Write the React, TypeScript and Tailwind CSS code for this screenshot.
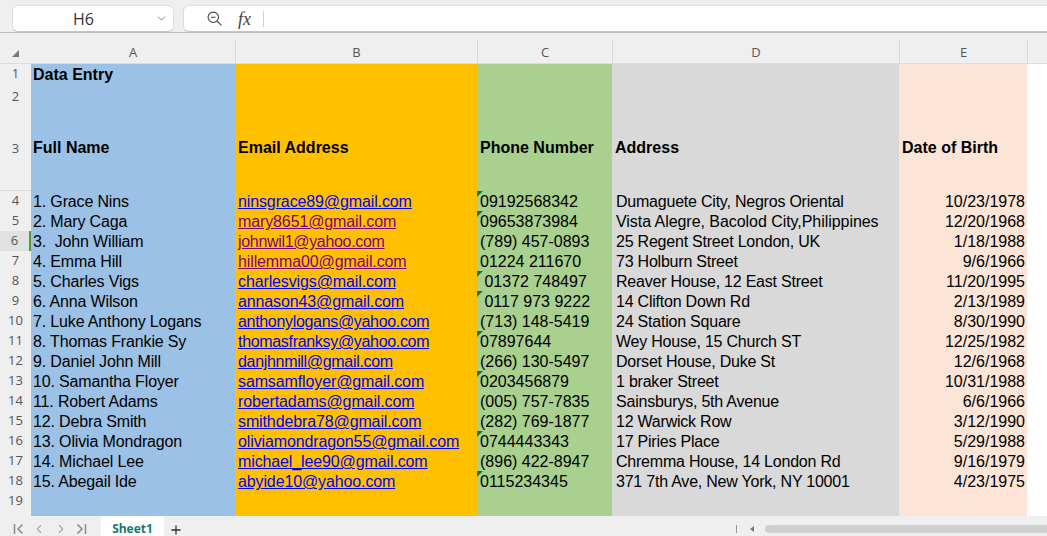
import { ChevronDown, Plus, ChevronLeft, ChevronRight } from "lucide-react";

const people = [
  { name: "1. Grace Nins", email: "ninsgrace89@gmail.com", phone: "09192568342", address: "Dumaguete City, Negros Oriental", dob: "10/23/1978", flag: true },
  { name: "2. Mary Caga", email: "mary8651@gmail.com", visited: true, phone: "09653873984", address: "Vista Alegre, Bacolod City,Philippines", wide: true, dob: "12/20/1968", flag: true },
  { name: "3.  John William", email: "johnwil1@yahoo.com", visited: true, tight: true, phone: "(789) 457-0893", address: "25 Regent Street London, UK", dob: "1/18/1988" },
  { name: "4. Emma Hill", email: "hillemma00@gmail.com", visited: true, phone: "01224 211670", address: "73 Holburn Street", dob: "9/6/1966" },
  { name: "5. Charles Vigs", email: "charlesvigs@mail.com", phone: " 01372 748497", address: "Reaver House, 12 East Street", dob: "11/20/1995", flag: true },
  { name: "6. Anna Wilson", email: "annason43@gmail.com", phone: " 0117 973 9222", address: "14 Clifton Down Rd", dob: "2/13/1989", flag: true },
  { name: "7. Luke Anthony Logans", email: "anthonylogans@yahoo.com", tight: true, phone: "(713) 148-5419", address: "24 Station Square", dob: "8/30/1990" },
  { name: "8. Thomas Frankie Sy", email: "thomasfranksy@yahoo.com", tight: true, phone: "07897644", address: "Wey House, 15 Church ST", dob: "12/25/1982", flag: true },
  { name: "9. Daniel John Mill", email: "danjhnmill@gmail.com", tight: true, phone: "(266) 130-5497", address: "Dorset House, Duke St", dob: "12/6/1968" },
  { name: "10. Samantha Floyer", email: "samsamfloyer@gmail.com", phone: "0203456879", address: "1 braker Street", dob: "10/31/1988", flag: true },
  { name: "11. Robert Adams", email: "robertadams@gmail.com", phone: "(005) 757-7835", address: "Sainsburys, 5th Avenue", dob: "6/6/1966" },
  { name: "12. Debra Smith", email: "smithdebra78@gmail.com", phone: "(282) 769-1877", address: "12 Warwick Row", dob: "3/12/1990" },
  { name: "13. Olivia Mondragon", email: "oliviamondragon55@gmail.com", phone: "0744443343", address: "17 Piries Place", dob: "5/29/1988", flag: true },
  { name: "14. Michael Lee", email: "michael_lee90@gmail.com", phone: "(896) 422-8947", address: "Chremma House, 14 London Rd", dob: "9/16/1979" },
  { name: "15. Abegail Ide", email: "abyide10@yahoo.com", phone: "0115234345", address: "371 7th Ave, New York, NY 10001", dob: "4/23/1975", flag: true },
];

const grid = "grid grid-cols-[31px_204px_242px_135px_287px_128px_20px]";
const rowNum = "flex items-center justify-center border-b border-[#dcdcdc] text-[13px] font-['Open_Sans',sans-serif] text-[#555]";
const cell = "flex items-center whitespace-pre text-[16px] leading-5 text-black overflow-visible";

function Row({ num, h, active, numPad = "pb-[2px]", children }: { num?: number; h: string; active?: boolean; numPad?: string; children?: React.ReactNode }) {
  return (
    <div className={`${grid} ${h}`}>
      <div className={`${rowNum} ${numPad} ${active ? "bg-[#e1e1e1] text-[#0f7b6c] border-r-2 border-r-[#4c9a3f]" : "bg-[#efefef]"}`}>{num}</div>
      {children}
    </div>
  );
}

function EmptyCells() {
  return (
    <>
      <div className="bg-[#9bc2e6]" />
      <div className="bg-[#ffc000]" />
      <div className="bg-[#a9d08e]" />
      <div className="bg-[#d9d9d9]" />
      <div className="bg-[#fce4d6]" />
    </>
  );
}

function Header({ label }: { label: string }) {
  return (
    <div className={`mt-[7px] flex items-center justify-center pt-[3px] font-['Open_Sans',sans-serif] text-[13px] text-[#555] ${label === "A" ? "" : "border-l border-[#d8d8d8]"}`}>
      {label}
    </div>
  );
}

export default function App() {
  return (
    <div className="flex h-[536px] w-[1047px] flex-col overflow-hidden bg-white font-['Liberation_Sans',Arial,sans-serif]">
      {/* formula bar */}
      <div className="flex h-[33px] shrink-0 items-start gap-[9px] border-b border-[#bdbdbd] bg-[#efefef] pl-3 pt-[5px] font-['Open_Sans',sans-serif]">
        <div className="flex h-[27px] w-[162px] items-center justify-between rounded-md border border-[#dcdcdc] border-b-[#c4c4c4] bg-white pl-[60px] pr-[5px] text-[16px] text-[#333]">
          H6
          <ChevronDown size={13} strokeWidth={1.5} className="text-[#666]" />
        </div>
        <div className="flex h-[27px] flex-1 items-center rounded-l-md border border-r-0 border-[#dcdcdc] border-b-[#c4c4c4] bg-white pl-[23px]">
          <svg width="15" height="15" viewBox="0 0 15 15" fill="none" stroke="#444" strokeWidth="1.1">
            <circle cx="6.3" cy="6.3" r="5.2" />
            <path d="M4 6.3h4.6M10 10l4.4 4.4" />
          </svg>
          <span className="ml-[16px] font-['Liberation_Serif',serif] text-[18px] italic leading-none text-[#444]">fx</span>
          <div className="ml-[12px] h-4 w-px bg-[#cfcfcf]" />
        </div>
      </div>

      {/* column headers */}
      <div className={`${grid} h-[31px] shrink-0 border-b border-[#dcdcdc] bg-[#efefef]`}>
        <div className="flex items-end justify-center pb-[6px]">
          <div className="h-0 w-0 border-b-[7px] border-l-[7px] border-b-[#777] border-l-transparent" />
        </div>
        <Header label="A" />
        <Header label="B" />
        <Header label="C" />
        <Header label="D" />
        <Header label="E" />
        <div className="mt-[7px] border-l border-[#d8d8d8]" />
      </div>

      {/* sheet */}
      <div className="flex-1 overflow-hidden bg-white">
        <Row num={1} h="h-5">
          <div className={`${cell} bg-[#9bc2e6] pl-[2px] font-bold`}>Data Entry</div>
          <div className="bg-[#ffc000]" />
          <div className="bg-[#a9d08e]" />
          <div className="bg-[#d9d9d9]" />
          <div className="bg-[#fce4d6]" />
        </Row>
        <Row num={2} h="h-5" numPad="pt-[3px]">
          <EmptyCells />
        </Row>
        <Row num={3} h="h-[87px]" numPad="pt-[3px]">
          <div className={`${cell} pt-[1px] bg-[#9bc2e6] pl-[2px] font-bold`}>Full Name</div>
          <div className={`${cell} pt-[1px] bg-[#ffc000] pl-[3px] font-bold`}>Email Address</div>
          <div className={`${cell} pt-[1px] bg-[#a9d08e] pl-[3px] font-bold`}>Phone Number</div>
          <div className={`${cell} pt-[1px] bg-[#d9d9d9] pl-[3px] font-bold`}>Address</div>
          <div className={`${cell} pt-[1px] bg-[#fce4d6] pl-[3px] font-bold`}>Date of Birth</div>
        </Row>
        {people.map((p, i) => (
          <Row key={p.email} num={i + 4} h="h-5" active={i === 2}>
            <div className={`${cell} bg-[#9bc2e6] pl-[2px] tracking-[-0.15px]`}>{p.name}</div>
            <div className={`${cell} bg-[#ffc000] pl-[3px]`}>
              <span className={`underline ${p.tight ? "tracking-[-0.32px]" : "tracking-[-0.12px]"} ${p.visited ? "text-[#800080]" : "text-[#0000ff]"}`}>{p.email}</span>
            </div>
            <div className={`${cell} relative bg-[#a9d08e] pl-[3px]`}>
              {p.flag && (
                <div className="absolute left-0 top-0 h-0 w-0 border-r-[6px] border-t-[6px] border-r-transparent border-t-[#107c41]" />
              )}
              {p.phone}
            </div>
            <div className={`${cell} bg-[#d9d9d9] pl-[4px] ${p.wide ? "tracking-[-0.05px]" : "tracking-[-0.22px]"}`}>{p.address}</div>
            <div className={`${cell} justify-end bg-[#fce4d6] pr-[2px]`}>{p.dob}</div>
          </Row>
        ))}
        <Row num={19} h="h-5">
          <EmptyCells />
        </Row>
        <Row h="h-5">
          <EmptyCells />
        </Row>
      </div>

      {/* sheet tabs */}
      <div className="flex h-5 shrink-0 items-end bg-[#efefef]">
        <div className="flex h-[14px] w-[101px] items-center gap-[8px] pl-[13px] text-[#8a8a8a]">
          <svg width="11" height="12" viewBox="0 0 11 12" fill="none" stroke="currentColor" strokeWidth="1.5">
            <path d="M1.5 1v10M9.5 1.5 5 6l4.5 4.5" />
          </svg>
          <ChevronLeft size={14} strokeWidth={1.8} />
          <ChevronRight size={14} strokeWidth={1.8} />
          <svg width="11" height="12" viewBox="0 0 11 12" fill="none" stroke="currentColor" strokeWidth="1.5">
            <path d="M9.5 1v10M1.5 1.5 6 6l-4.5 4.5" />
          </svg>
        </div>
        <div className="flex h-full w-[63px] items-end justify-center bg-white font-['Open_Sans',sans-serif] text-[12px] font-bold leading-[14px] text-[#0f7b6c]">
          Sheet1
        </div>
        <Plus size={14} strokeWidth={2.2} className="-mb-px ml-[5px] text-[#333]" />
        <div className="mb-[3px] ml-auto flex items-center">
          <div className="h-[8px] w-px bg-[#999]" />
          <div className="ml-[13px] h-0 w-0 border-y-[3px] border-r-[4px] border-y-transparent border-r-[#777]" />
          <div className="ml-[11px] h-2 w-[282px] rounded-l bg-[#cfcfcf]" />
        </div>
      </div>
    </div>
  );
}
